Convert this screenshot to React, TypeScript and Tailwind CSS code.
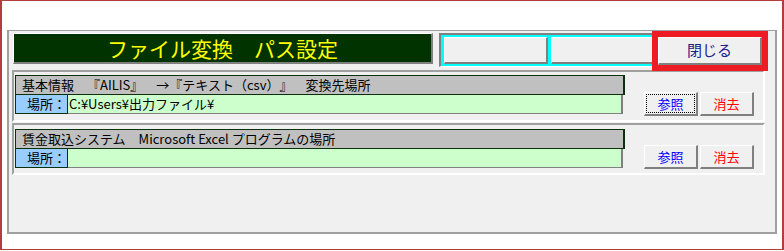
const btn =
  "flex items-center justify-center bg-[#f0f0f0] border-t border-l border-t-white border-l-white border-r-2 border-b-2 border-r-[#808080] border-b-[#808080]";

function Section({ title, path, focused, top }: { title: string; path: string; focused?: boolean; top: string }) {
  return (
    <div className={`ml-0 flex w-[753px] h-[52px] items-end border-2 border-t-[#a0a0a0] border-l-[#a0a0a0] border-r-white border-b-white pl-[1px] ${top}`}>
      <div className="flex flex-col self-start w-[610px]">
        <div className="flex h-[20px] items-center border border-r-2 border-[#0b300b] bg-[#c0c0c0] px-[6px] text-[13px] leading-[18px] text-black whitespace-nowrap">
          {title}
        </div>
        <div className="flex h-[19px] w-[608px]">
          <div className="flex w-[53px] items-center justify-end border-x border-b border-[#0b300b] bg-[#99ccff] pr-[1px] text-[13px] leading-[18px]">
            場所：
          </div>
          <div className="flex flex-1 items-center border-r-2 border-b border-[#808080] bg-[#ccffcc] pl-[1px] text-[13px] leading-[18px] text-black">
            {path}
          </div>
        </div>
      </div>
      <div className="ml-[19px] mb-[4px] flex gap-[2px]">
        <button className={`${btn} w-[54px] h-[24px] p-[1px] text-[13px] text-[#0000ff]`}>
          <span className={`flex h-full w-full items-center justify-center ${focused ? "border border-dotted border-black" : ""}`}>参照</span>
        </button>
        <button className={`${btn} w-[54px] h-[24px] text-[13px] text-[#ff0000]`}>消去</button>
      </div>
    </div>
  );
}

export default function App() {
  return (
    <div className="w-[784px] h-[251px] bg-white font-['Noto_Sans_CJK_JP',sans-serif] [text-spacing-trim:space-all]">
      <div className="w-[784px] h-[250px] border-x-2 border-y border-[#b33c3c]">
        <div className="ml-[5px] mt-[29px] w-[770px] h-[204px] border-2 border-t border-[#a0a0a0] bg-[#f0f0f0] pl-[3px] pt-[2px]">
          {/* title row */}
          <div className="flex items-start">
            <div className="ml-[1px] flex w-[420px] h-[31px] items-center justify-center border-t border-l border-t-white border-l-white border-r-2 border-b-2 border-r-[#808080] border-b-[#808080] bg-[#003300] text-[21px] leading-none text-[#ffff00]">
              ファイル変換　パス設定
            </div>
            <div className="ml-[6px] flex w-[219px] h-[34px] gap-[3px] border-t-2 border-l-2 border-t-[#808080] border-l-[#808080] border-b border-r border-b-white border-r-white bg-[#00ffff] pl-[3px] pt-[2px]">
              <div className={`${btn} w-[104px] h-[27px]`} />
              <div className={`${btn} w-[104px] h-[27px]`} />
            </div>
            <button className={`${btn} relative z-10 mt-[4px] w-[104px] h-[28px] text-[15px] text-[#20208a] outline-[6px] outline-solid outline-[#ed1c24]`}>
              閉じる
            </button>
          </div>

          <div className="mt-[3px] flex flex-col gap-[1px]">
            <Section
              top="pt-[3px]"
              focused
              title="基本情報　『AILIS』　→『テキスト（csv）』　変換先場所"
              path="C:¥Users¥出力ファイル¥"
            />
            <Section
              top="pt-[4px]"
              title="賃金取込システム　Microsoft Excel プログラムの場所"
              path=""
            />
          </div>
        </div>
      </div>
    </div>
  );
}
